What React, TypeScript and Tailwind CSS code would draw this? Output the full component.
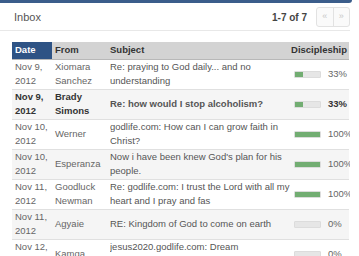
import React from "react";

type Message = {
	date: [string, string];
	from: string[];
	subject: string;
	progress: number;
	unread?: boolean;
};

const messages: Message[] = [
	{
		date: ["Nov 9,", "2012"],
		from: ["Xiomara", "Sanchez"],
		subject: "Re: praying to God daily... and no understanding",
		progress: 33,
	},
	{
		date: ["Nov 9,", "2012"],
		from: ["Brady", "Simons"],
		subject: "Re: how would I stop alcoholism?",
		progress: 33,
		unread: true,
	},
	{
		date: ["Nov 10,", "2012"],
		from: ["Werner"],
		subject: "godlife.com: How can I can grow faith in Christ?",
		progress: 100,
	},
	{
		date: ["Nov 10,", "2012"],
		from: ["Esperanza"],
		subject: "Now i have been knew God's plan for his people.",
		progress: 100,
	},
	{
		date: ["Nov 11,", "2012"],
		from: ["Goodluck", "Newman"],
		subject: "Re: godlife.com: I trust the Lord with all my heart and I pray and fas",
		progress: 100,
	},
	{
		date: ["Nov 11,", "2012"],
		from: ["Agyaie"],
		subject: "RE: Kingdom of God to come on earth",
		progress: 0,
	},
	{
		date: ["Nov 12,", "2012"],
		from: ["Kamga"],
		subject: "jesus2020.godlife.com: Dream Interpretation",
		progress: 0,
	},
];

function ProgressBar({ value }: { value: number }) {
	return (
		<div className="h-[7px] w-[27px] shrink-0 bg-[#e6e6e6] border border-[#dcdcdc] rounded-[1px] overflow-hidden">
			<div className="h-full bg-[#72ad72]" style={{ width: `${value}%` }} />
		</div>
	);
}

export default function App() {
	return (
		<div
			className="w-[359px] h-[256px] bg-white overflow-hidden text-[9.5px] text-[#666]"
			style={{ fontFamily: '"Liberation Sans", Arial, sans-serif' }}
		>
			<div className="h-[3px] w-[352px] bg-[#3b5d8b] rounded-br-[4px]" />

			<div className="w-[350px] overflow-hidden">
				{/* toolbar */}
				<div className="flex items-center h-[28px] pl-[14px] border-b border-[#e8e8e8]">
					<span className="text-[11px] text-[#555] flex-1 pt-[2px]">Inbox</span>
					<span className="text-[10px] font-bold text-[#444] mr-[9px] pt-[1px]">1-7 of 7</span>
					<div className="flex h-[20px] w-[34px] border border-[#e2e2e2] rounded-[3px] bg-[#fafafa] text-[9px] text-[#c8c8c8]">
						<span className="flex-1 flex items-center justify-center border-r border-[#e2e2e2]">«</span>
						<span className="flex-1 flex items-center justify-center">»</span>
					</div>
				</div>

				{/* message table */}
				<table className="mt-[11px] ml-[12px] w-[337px] border-collapse table-fixed">
					<colgroup>
						<col className="w-[40px]" />
						<col className="w-[55px]" />
						<col className="w-[187px]" />
						<col className="w-[55px]" />
					</colgroup>
					<thead>
						<tr className="h-[17px] bg-[#d3d3d3] text-[#333] font-bold border-b border-[#b8b8b8]">
							<th className="text-left pl-[3px] bg-[#2e5385] text-white font-bold">Date</th>
							<th className="text-left pl-[3px]">From</th>
							<th className="text-left pl-[3px]">Subject</th>
							<th className="text-right pr-[2px] whitespace-nowrap overflow-visible">
								<div className="flex justify-end">
									<span>Discipleship</span>
								</div>
							</th>
						</tr>
					</thead>
					<tbody>
						{messages.map((m, i) => (
							<tr
								key={i}
								className={`h-[30px] border-b border-[#e0e0e0] leading-[14px] ${
									i % 2 === 1 ? "bg-[#f5f5f5]" : "bg-white"
								} ${m.unread ? "font-bold text-[#333]" : ""}`}
							>
								<td className="pl-[3px] align-middle whitespace-nowrap">
									{m.date[0]}
									<br />
									{m.date[1]}
								</td>
								<td className="pl-[3px] align-middle whitespace-nowrap">
									{m.from.map((f, j) => (
										<div key={j}>{f}</div>
									))}
								</td>
								<td className="pl-[3px] pr-[2px] align-middle text-[#555]">
									<div className="max-h-[28px] overflow-hidden">{m.subject}</div>
								</td>
								<td className="align-middle overflow-visible">
									<div className="flex items-center">
										<ProgressBar value={m.progress} />
										<span className="ml-[7px] whitespace-nowrap">{m.progress}%</span>
									</div>
								</td>
							</tr>
						))}
					</tbody>
				</table>
			</div>
		</div>
	);
}
